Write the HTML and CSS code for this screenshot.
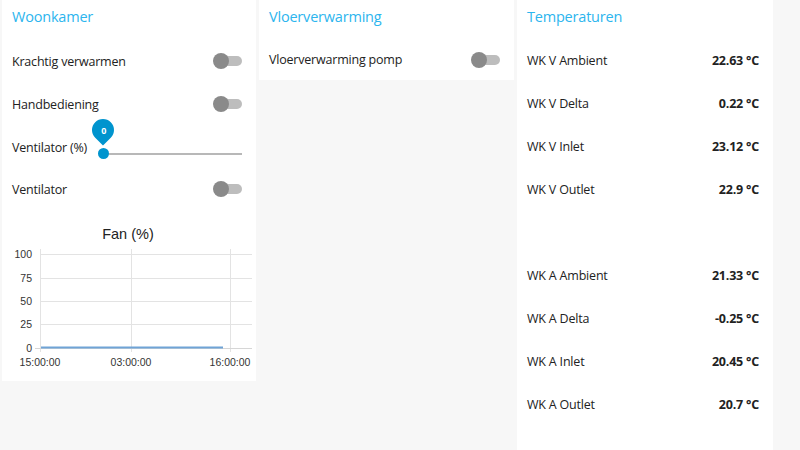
FILE: index.html
```html
<!DOCTYPE html>
<html>
<head>
<meta charset="utf-8">
<link rel="stylesheet" href="styles.css">
</head>
<body>
<div class="dash">
  <section class="card card-wk">
    <h2 class="title">Woonkamer</h2>
    <div class="row r1"><span class="label">Krachtig verwarmen</span><span class="switch"><span class="knob"></span></span></div>
    <div class="row r2"><span class="label">Handbediening</span><span class="switch"><span class="knob"></span></span></div>
    <div class="row r3"><span class="label slabel">Ventilator (%)</span>
      <div class="slider">
        <div class="track"></div>
        <div class="thumb"></div>
        <div class="pin"><span class="pin-val">0</span></div>
      </div>
    </div>
    <div class="row r4"><span class="label">Ventilator</span><span class="switch"><span class="knob"></span></span></div>
    <svg class="chart" width="254" height="172" viewBox="0 0 254 172">
      <text x="126" y="30" class="ctitle" text-anchor="middle">Fan (%)</text>
      <g stroke="#e3e3e3" stroke-width="1">
        <line x1="38" y1="45.5" x2="250" y2="45.5"/>
        <line x1="38" y1="69.5" x2="250" y2="69.5"/>
        <line x1="38" y1="92.5" x2="250" y2="92.5"/>
        <line x1="38" y1="115.5" x2="250" y2="115.5"/>
        <line x1="38.5" y1="40" x2="38.5" y2="143"/>
        <line x1="129.5" y1="40" x2="129.5" y2="143"/>
        <line x1="228.5" y1="40" x2="228.5" y2="143"/>
      </g>
      <line x1="33" y1="139.5" x2="250" y2="139.5" stroke="#d6d6d6"/>
      <g class="ylab" text-anchor="end">
        <text x="30" y="49">100</text>
        <text x="30" y="73">75</text>
        <text x="30" y="96">50</text>
        <text x="30" y="119">25</text>
        <text x="30" y="143">0</text>
      </g>
      <g class="xlab" text-anchor="middle">
        <text x="38" y="157">15:00:00</text>
        <text x="129" y="157">03:00:00</text>
        <text x="228" y="157">16:00:00</text>
      </g>
      <line x1="39" y1="138.5" x2="221" y2="138.5" stroke="#6fa3d6" stroke-width="2"/>
    </svg>
  </section>
  <section class="card card-vv">
    <h2 class="title">Vloerverwarming</h2>
    <div class="row rv"><span class="label">Vloerverwarming pomp</span><span class="switch"><span class="knob"></span></span></div>
  </section>
  <section class="card card-t">
    <h2 class="title">Temperaturen</h2>
    <div class="trow"><span class="label">WK V Ambient</span><span class="val">22.63 °C</span></div>
    <div class="trow"><span class="label">WK V Delta</span><span class="val">0.22 °C</span></div>
    <div class="trow"><span class="label">WK V Inlet</span><span class="val">23.12 °C</span></div>
    <div class="trow"><span class="label">WK V Outlet</span><span class="val">22.9 °C</span></div>
    <div class="trow"></div>
    <div class="trow"><span class="label">WK A Ambient</span><span class="val">21.33 °C</span></div>
    <div class="trow"><span class="label">WK A Delta</span><span class="val">-0.25 °C</span></div>
    <div class="trow"><span class="label">WK A Inlet</span><span class="val">20.45 °C</span></div>
    <div class="trow"><span class="label">WK A Outlet</span><span class="val">20.7 °C</span></div>
  </section>
</div>
</body>
</html>
```

FILE: styles.css
```css
html, body {
  margin: 0;
  padding: 0;
  background: #f7f7f7;
  width: 800px;
  height: 450px;
  overflow: hidden;
  font-family: "Open Sans", "Noto Sans", sans-serif;
  color: #222;
}
.dash {
  display: flex;
  align-items: flex-start;
  gap: 3px;
  padding-left: 2px;
}
.card {
  background: #fff;
  width: 254px;
  box-sizing: border-box;
  display: flex;
  flex-direction: column;
}
.card-vv { width: 255px; }
.card-wk { height: 381px; }
.card-vv { height: 80px; }
.card-t { height: 460px; width: 256px; }
.title {
  margin: 0;
  height: 39px;
  padding: 7px 0 0 10px;
  box-sizing: border-box;
  font-size: 14.5px;
  letter-spacing: -0.2px;
  line-height: 20px;
  font-weight: 400;
  color: #2cb5ee;
}
.row {
  display: flex;
  align-items: center;
  justify-content: space-between;
  padding: 0 14px 0 10px;
  font-size: 12.5px;
  letter-spacing: -0.2px;
  position: relative;
}
.r1 { height: 44px; }
.r2 { height: 42px; }
.r3 { height: 44px; }
.r4 { height: 40px; }
.rv { height: 41px; }
.label { white-space: nowrap; }
.slabel { width: 91px; flex: none; }
.switch {
  position: relative;
  width: 29px;
  height: 16px;
  flex: none;
}
.switch::before {
  content: "";
  position: absolute;
  left: 7px;
  right: 0;
  top: 3px;
  height: 10px;
  border-radius: 5px;
  background: #bdbdbd;
}
.knob {
  position: absolute;
  left: 0;
  top: 0;
  width: 16px;
  height: 16px;
  border-radius: 50%;
  background: #8a8a8a;
}
.slider {
  position: relative;
  flex: 1;
  height: 14px;
  margin-top: 14px;
}
.track {
  position: absolute;
  left: 0;
  right: 0;
  top: 6px;
  height: 2px;
  background: #b8b8b8;
}
.thumb {
  position: absolute;
  left: -5px;
  top: 1px;
  width: 11px;
  height: 11px;
  border-radius: 50%;
  background: #0094ce;
}
.pin {
  position: absolute;
  left: -11px;
  top: -28px;
  width: 22px;
  height: 22px;
  border-radius: 50% 50% 50% 0;
  transform: rotate(-45deg);
  background: #0094ce;
  display: flex;
  align-items: center;
  justify-content: center;
}
.pin-val {
  transform: rotate(45deg);
  color: #fff;
  font-size: 9px;
  font-weight: 700;
  line-height: 1;
}
.chart { display: block; margin-top: 0; }
.ctitle { font-family: "Liberation Sans", Arial, sans-serif; font-size: 14.5px; fill: #222; }
.ylab text, .xlab text { font-family: "Liberation Sans", Arial, sans-serif; font-size: 10.5px; fill: #333; }
.trow {
  display: flex;
  align-items: center;
  justify-content: space-between;
  height: 43px;
  padding: 0 14px 0 10px;
  font-size: 12.5px;
  letter-spacing: -0.2px;
  flex: none;
}
.val { font-weight: 700; white-space: nowrap; }
```
